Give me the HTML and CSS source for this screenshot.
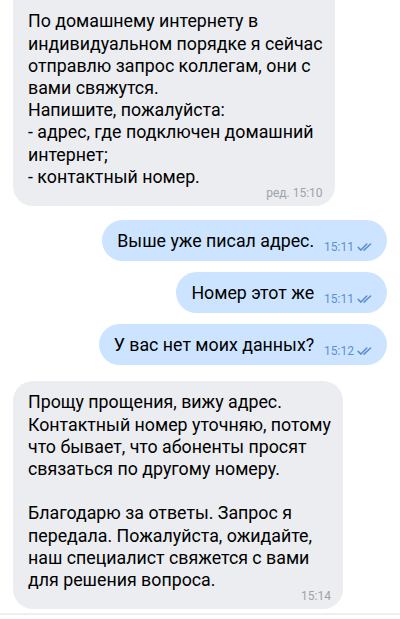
FILE: index.html
```html
<!DOCTYPE html>
<html lang="ru">
<head>
  <meta charset="UTF-8">
  <meta name="viewport" content="width=device-width, initial-scale=1.0">
  <title>Чат поддержки</title>
  <link rel="stylesheet" href="styles.css">
</head>
<body>
  <div class="chat">
    <!-- Incoming: operator -->
    <div class="msg in">
      <p class="text">По домашнему интернету в<br>индивидуальном порядке я сейчас<br>отправлю запрос коллегам, они с<br>вами свяжутся.<br>Напишите, пожалуйста:<br>- адрес, где подключен домашний<br>интернет;<br>- контактный номер.<span class="meta">ред. 15:10</span></p>
    </div>

    <!-- Outgoing: me -->
    <div class="msg out">
      <span class="text">Выше уже писал адрес.</span>
      <span class="meta">15:11 <svg class="ticks" viewBox="0 0 16 8"><path d="M1.2 4.4l2.7 2.7L9.8 1M7 7.1L13.6 1"/></svg></span>
    </div>
    <div class="msg out">
      <span class="text">Номер этот же</span>
      <span class="meta">15:11 <svg class="ticks" viewBox="0 0 16 8"><path d="M1.2 4.4l2.7 2.7L9.8 1M7 7.1L13.6 1"/></svg></span>
    </div>
    <div class="msg out">
      <span class="text">У вас нет моих данных?</span>
      <span class="meta">15:12 <svg class="ticks" viewBox="0 0 16 8"><path d="M1.2 4.4l2.7 2.7L9.8 1M7 7.1L13.6 1"/></svg></span>
    </div>

    <div class="msg in">
      <p class="text">Прощу прощения, вижу адрес.<br>Контактный номер уточняю, потому<br>что бывает, что абоненты просят<br>связаться по другому номеру.<br><br>Благодарю за ответы. Запрос я<br>передала. Пожалуйста, ожидайте,<br>наш специалист свяжется с вами<br>для решения вопроса.<span class="meta">15:14</span></p>
    </div>
  </div>

  <div class="composer"></div>
</body>
</html>
```

FILE: styles.css
```css
/* Page */
html, body {
  height: 100%;
}

body {
  margin: 0;
  display: flex;
  flex-direction: column;
  background: #fff;
  font-family: Roboto, 'Noto Sans', sans-serif;
  color: #000;
  overflow: hidden;
}

/* Message list, pinned to the bottom like a scrolled chat */
.chat {
  flex: 1;
  display: flex;
  flex-direction: column;
  justify-content: flex-end;
  padding: 0 13px 4px;
  overflow: hidden;
}

/* Bubbles */
.msg {
  width: fit-content;
  flex-shrink: 0;
  border-radius: 20px;
  font-size: 17.8px;
  line-height: 22.2px;
}

.msg + .msg {
  margin-top: 11px;
}

.in + .out {
  margin-top: 14px;
}

.out + .in {
  margin-top: 16px;
}

.in {
  align-self: flex-start;
  background: #ebedf0;
  padding: 10px 12px 6px 15px;
}

/* earliest message runs on above the scrolled edge */
.msg:first-child {
  padding-top: 40px;
}

.out {
  align-self: flex-end;
  display: flex;
  align-items: flex-end;
  background: #cce4ff;
  padding: 10px 14px 9px 15px;
  border-radius: 21px;
}

.text {
  margin: 0;
}

.in .text {
  display: flow-root;
}

/* Time + edit / read marks */
.meta {
  font-size: 12px;
  line-height: 14px;
  white-space: nowrap;
}

.in .meta {
  float: right;
  margin-top: 20px;
  margin-left: 12px;
  color: #9ea3aa;
}

.out .meta {
  display: flex;
  align-items: center;
  gap: 3px;
  margin-left: 10px;
  margin-bottom: -2px;
  color: #5d90cf;
}

.ticks {
  width: 16px;
  height: 8px;
  fill: none;
  stroke: #5b8ecf;
  stroke-width: 1.5;
  stroke-linecap: round;
  stroke-linejoin: round;
}

/* Top edge of the input bar */
.composer {
  height: 4px;
  border-top: 2px solid #eeeff1;
  background: #fff;
}
```
